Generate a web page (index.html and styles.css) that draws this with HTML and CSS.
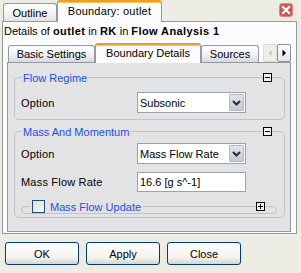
FILE: index.html
```html
<!DOCTYPE html>
<html lang="en">
<head>
  <meta charset="UTF-8" />
  <title>Boundary: outlet</title>
  <link rel="stylesheet" href="styles.css">
</head>
<body>

  <div class="top-tabs">
    <div class="tab tab-outline">Outline</div>
    <div class="tab active tab-boundary">Boundary: outlet</div>
    <div class="close-btn">
      <svg width="14" height="14" viewBox="0 0 14 14"><rect x="0.5" y="0.5" width="13" height="13" rx="2.5" fill="#c95a52" stroke="#d98a84"/><path d="M4 4L10 10M10 4L4 10" stroke="#fff" stroke-width="2.2" stroke-linecap="square"/></svg>
    </div>
  </div>

  <div class="frame">
    <div class="details">Details of <b>outlet</b> in <b>RK</b> in <b>Flow Analysis 1</b></div>

    <div class="inner-tabs">
      <div class="tab tab-basic">Basic Settings</div>
      <div class="tab active tab-details">Boundary Details</div>
      <div class="tab tab-sources">Sources</div>
      <div class="scroll-btns">
        <span class="arrow disabled"><svg width="12" height="16" viewBox="0 0 12 16"><path d="M7.5 5L4.5 8L7.5 11Z" fill="#c4c4c0"/></svg></span>
        <span class="arrow"><svg width="12" height="16" viewBox="0 0 12 16"><path d="M4.5 4.5L8 8L4.5 11.5Z" fill="#000"/></svg></span>
      </div>
    </div>

    <div class="panel">
      <div class="group flow">
        <div class="group-head">
          <span class="legend">Flow Regime</span>
          <span class="toggle"><svg width="9" height="9" viewBox="0 0 9 9"><rect x="0.5" y="0.5" width="8" height="8" fill="#f2f2f2" stroke="#000"/><path d="M2 4.5H7" stroke="#000"/></svg></span>
        </div>
        <div class="row first">
          <span class="label">Option</span>
          <div class="combo"><span>Subsonic</span><span class="combo-btn"><svg width="13" height="15" viewBox="0 0 13 15"><path d="M3 6L6.5 9.5L10 6" fill="none" stroke="#2a2a35" stroke-width="2"/></svg></span></div>
        </div>
      </div>

      <div class="group mm">
        <div class="group-head">
          <span class="legend">Mass And Momentum</span>
          <span class="toggle"><svg width="9" height="9" viewBox="0 0 9 9"><rect x="0.5" y="0.5" width="8" height="8" fill="#f2f2f2" stroke="#000"/><path d="M2 4.5H7" stroke="#000"/></svg></span>
        </div>
        <div class="row first">
          <span class="label">Option</span>
          <div class="combo"><span>Mass Flow Rate</span><span class="combo-btn"><svg width="13" height="15" viewBox="0 0 13 15"><path d="M3 6L6.5 9.5L10 6" fill="none" stroke="#2a2a35" stroke-width="2"/></svg></span></div>
        </div>
        <div class="row second">
          <span class="label">Mass Flow Rate</span>
          <div class="field">16.6 [g s^-1]</div>
        </div>

        <div class="subgroup">
          <div class="sub-head">
            <span class="sub-legend"><span class="checkbox"></span>Mass Flow Update</span>
            <span class="toggle"><svg width="9" height="9" viewBox="0 0 9 9"><rect x="0.5" y="0.5" width="8" height="8" fill="#f2f2f2" stroke="#000"/><path d="M2 4.5H7M4.5 2V7" stroke="#000"/></svg></span>
          </div>
        </div>
      </div>
    </div>
  </div>

  <div class="buttons">
    <button>OK</button>
    <button>Apply</button>
    <button>Close</button>
  </div>

</body>
</html>
```

FILE: styles.css
```css
body {
  margin: 0;
  width: 301px;
  height: 273px;
  overflow: hidden;
  font-family: "Liberation Sans", Arial, sans-serif;
  font-size: 11px;
  color: #000;
  background: #ecebe4;
}
.top-tabs {
  display: flex;
  align-items: flex-end;
  height: 22px;
  margin-bottom: -1px;
  padding-left: 3px;
}
.tab {
  box-sizing: border-box;
  display: flex;
  align-items: center;
  justify-content: center;
  height: 18px;
  margin-bottom: 1px;
  border: 1px solid #919b9c;
  border-bottom: none;
  border-radius: 3px 3px 0 0;
  background: linear-gradient(#ffffff, #f4f4f2 55%, #e2e2e4);
  white-space: nowrap;
}
.tab.active {
  position: relative;
  z-index: 1;
  height: 22px;
  margin-bottom: 0;
  border-top: 2px solid #ee9c32;
  box-shadow: inset 0 1px #ffc84c;
  background: #fcfcfe;
  padding-bottom: 2px;
}
.tab-outline {
  width: 54px;
}
.tab-boundary {
  width: 105px;
  letter-spacing: 0.2px;
}
.close-btn {
  align-self: flex-start;
  margin: 3px 8px 0 auto;
  height: 14px;
}
.close-btn svg {
  display: block;
}
.frame {
  margin: 0 4px 0 2px;
  border: 1px solid #919b9c;
  background: #fcfcfe;
}
.details {
  height: 21px;
  line-height: 18px;
  padding-left: 1px;
  white-space: nowrap;
}
.details b {
  letter-spacing: 0.4px;
}
.inner-tabs {
  display: flex;
  align-items: flex-end;
  height: 20px;
  margin-bottom: -1px;
  padding-left: 5px;
}
.inner-tabs .tab {
  height: 17px;
  background: linear-gradient(#ffffff, #f2f2f4 50%, #d8d8e2);
}
.inner-tabs .tab.active {
  height: 20px;
  background: #fcfcfe;
}
.tab-basic {
  width: 87px;
}
.tab-details {
  width: 106px;
}
.tab-sources {
  width: 58px;
}
.scroll-btns {
  display: flex;
  align-self: flex-start;
  margin: 1px 5px 0 auto;
}
.arrow {
  box-sizing: border-box;
  width: 14px;
  height: 18px;
  border: 1px solid #8e8f8f;
  border-radius: 2px;
  background: linear-gradient(#fdfdfd, #e6e6e8);
}
.arrow svg {
  display: block;
}
.arrow.disabled {
  border-color: #dcdbd3;
  background: #eeede6;
}
.panel {
  box-sizing: border-box;
  height: 170px;
  margin: 0 5px 1px 4px;
  padding: 0 5px 0 6px;
  border: 1px solid #919b9c;
  background: #e3e3e6;
}
.group {
  border: 1px solid #c2c2c6;
  border-radius: 5px;
}
.flow {
  margin-top: 14px;
  padding-bottom: 6px;
}
.mm {
  margin-top: 11px;
  padding-bottom: 3px;
}
.group-head {
  display: flex;
  align-items: center;
  justify-content: space-between;
  height: 15px;
  margin-top: -8px;
  padding: 0 12px 0 7px;
}
.legend {
  padding: 0 1px;
  background: #e3e3e6;
  color: #1f4fe2;
}
.toggle {
  background: #e3e3e6;
  height: 9px;
}
.toggle svg {
  display: block;
}
.row {
  display: flex;
  align-items: center;
  margin: 0 7px 0 6px;
}
.flow .row.first {
  margin-top: 7px;
}
.mm .row.first {
  margin-top: 4px;
}
.row.second {
  margin-top: 8px;
}
.label {
  width: 116px;
  letter-spacing: 0.2px;
}
.combo {
  box-sizing: border-box;
  display: flex;
  align-items: center;
  width: 109px;
  height: 21px;
  padding-left: 2px;
  border: 1px solid #99a2ad;
  background: #fff;
}
.combo-btn {
  box-sizing: border-box;
  width: 15px;
  height: 17px;
  margin-left: auto;
  margin-right: 1px;
  border: 1px solid #b4b9c9;
  border-radius: 1px;
  background: linear-gradient(#e2e4ec, #c4c8d8);
}
.combo-btn svg {
  display: block;
}
.field {
  box-sizing: border-box;
  width: 109px;
  height: 20px;
  line-height: 18px;
  padding-left: 2px;
  border: 1px solid #99a2ad;
  background: #fff;
}
.subgroup {
  height: 6px;
  margin: 14px 7px 0 6px;
  border: 1px solid #c2c2c6;
  border-radius: 4px;
}
.sub-head {
  display: flex;
  align-items: center;
  justify-content: space-between;
  height: 13px;
  margin-top: -7px;
  padding: 0 11px 0 8px;
}
.sub-legend {
  display: flex;
  align-items: center;
  padding: 0 2px;
  background: #e3e3e6;
  color: #1f4fe2;
}
.checkbox {
  box-sizing: border-box;
  width: 13px;
  height: 13px;
  margin-right: 5px;
  border: 1px solid #1d4c7d;
  background: linear-gradient(135deg, #dcdcd6, #fbfbf9);
}
.buttons {
  display: flex;
  gap: 7px;
  margin-top: 8px;
  padding-left: 5px;
}
button {
  box-sizing: border-box;
  width: 74px;
  height: 23px;
  padding: 0;
  border: 1px solid #003c74;
  border-radius: 3px;
  background: linear-gradient(#ffffff, #f3f3ee 70%, #d8d4ca);
  font-family: "Liberation Sans", Arial, sans-serif;
  font-size: 11px;
  color: #000;
}
```
